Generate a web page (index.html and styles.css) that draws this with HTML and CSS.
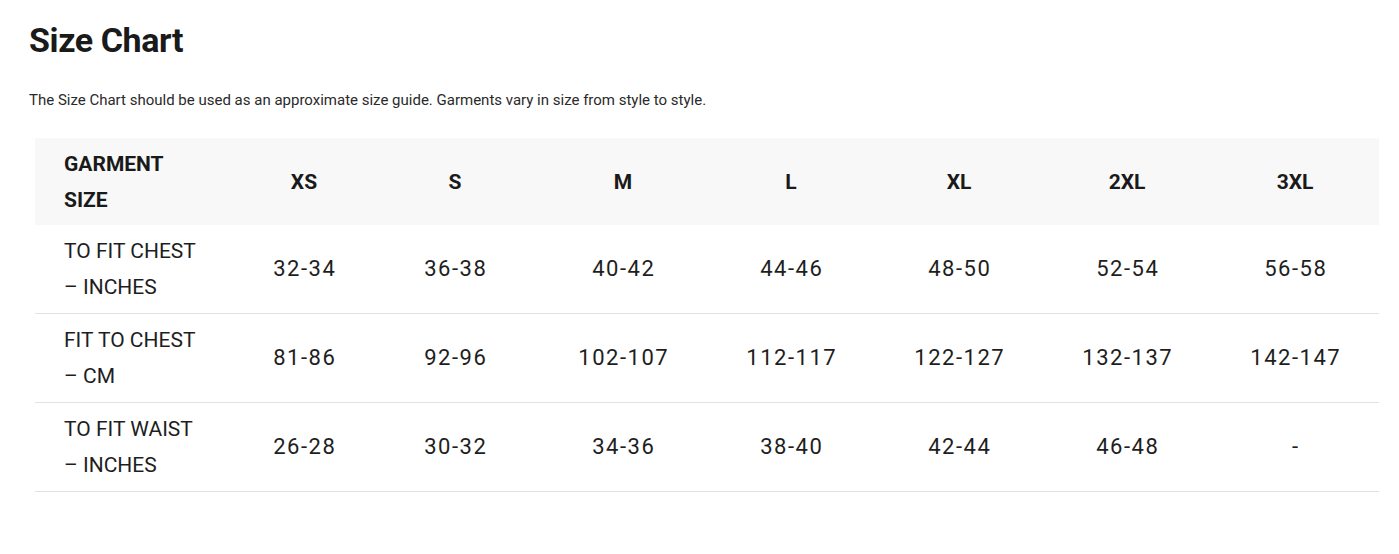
FILE: index.html
```html
<!DOCTYPE html>
<html lang="en">
<head>
<meta charset="utf-8">
<title>Size Chart</title>
<link rel="stylesheet" href="styles.css">
</head>
<body>
<main class="page">
  <h1 class="title">Size Chart</h1>
  <p class="intro">The Size Chart should be used as an approximate size guide. Garments vary in size from style to style.</p>
  <table class="chart">
    <colgroup>
      <col class="c-label">
      <col class="c-xs">
      <col class="c-size"><col class="c-size"><col class="c-size"><col class="c-size"><col class="c-size"><col class="c-size">
    </colgroup>
    <thead>
      <tr>
        <th class="label">GARMENT<br>SIZE</th>
        <th>XS</th><th>S</th><th>M</th><th>L</th><th>XL</th><th>2XL</th><th>3XL</th>
      </tr>
    </thead>
    <tbody>
      <tr>
        <td class="label">TO FIT CHEST<br>– INCHES</td>
        <td class="num">32-34</td><td class="num">36-38</td><td class="num">40-42</td><td class="num">44-46</td><td class="num">48-50</td><td class="num">52-54</td><td class="num">56-58</td>
      </tr>
      <tr>
        <td class="label">FIT TO CHEST<br>– CM</td>
        <td class="num">81-86</td><td class="num">92-96</td><td class="num">102-107</td><td class="num">112-117</td><td class="num">122-127</td><td class="num">132-137</td><td class="num">142-147</td>
      </tr>
      <tr>
        <td class="label">TO FIT WAIST<br>– INCHES</td>
        <td class="num">26-28</td><td class="num">30-32</td><td class="num">34-36</td><td class="num">38-40</td><td class="num">42-44</td><td class="num">46-48</td><td class="num">-</td>
      </tr>
    </tbody>
  </table>
</main>
</body>
</html>
```
FILE: styles.css
```css
html, body {
  margin: 0;
  padding: 0;
  background: #ffffff;
}
body {
  font-family: Roboto, "Liberation Sans", sans-serif;
  color: #1c1c1c;
}
.page {
  padding: 18px 20px 0 29px;
}
.title {
  margin: 0;
  font-size: 34px;
  line-height: 44px;
  font-weight: 700;
  letter-spacing: -0.4px;
  color: #1a1a1a;
}
.intro {
  margin: 28px 0 0 0;
  font-size: 15px;
  line-height: 20px;
  color: #2a2a2a;
}
.chart {
  margin: 28px 0 0 6px;
  width: 1344px;
  border-collapse: collapse;
  table-layout: fixed;
  font-size: 21px;
}
.c-label { width: 202px; }
.c-xs { width: 134px; }
.c-size { width: 168px; }
.chart thead tr {
  background: #f8f8f8;
}
.chart th {
  height: 87px;
  padding: 0;
  font-weight: 700;
  line-height: 36px;
  text-align: center;
  color: #1a1a1a;
}
.chart td {
  height: 88px;
  padding: 0;
  line-height: 36px;
  text-align: center;
  font-weight: 400;
  color: #1e1e1e;
  border-bottom: 1px solid #e2e2e2;
}
.chart .num {
  font-size: 22px;
  letter-spacing: 1.5px;
  text-indent: 1.5px;
}
.chart .label {
  text-align: left;
  padding-left: 29px;
}
```
